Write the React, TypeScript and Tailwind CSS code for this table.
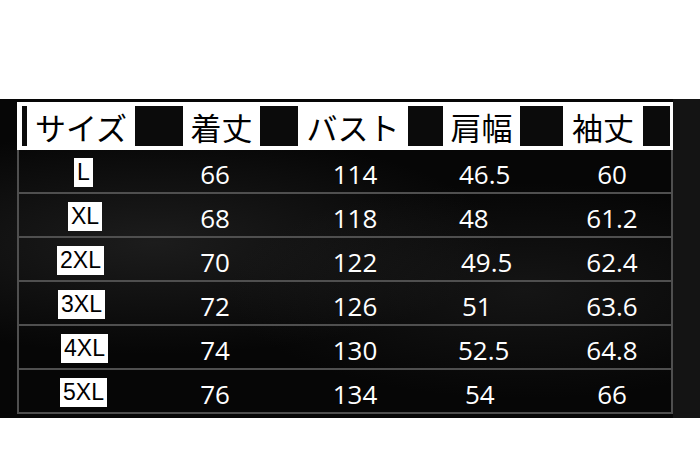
import React from "react";

type Row = {
  size: string;
  labelOffset: string;
  values: [string, string, string, string];
  shoulderPad: string;
};

const rows: Row[] = [
  { size: "L", labelOffset: "ml-[55px]", values: ["66", "114", "46.5", "60"], shoulderPad: "pl-[30px]" },
  { size: "XL", labelOffset: "ml-[49px]", values: ["68", "118", "48", "61.2"], shoulderPad: "pl-[30px]" },
  { size: "2XL", labelOffset: "ml-[38px]", values: ["70", "122", "49.5", "62.4"], shoulderPad: "pl-[32px]" },
  { size: "3XL", labelOffset: "ml-[39px]", values: ["72", "126", "51", "63.6"], shoulderPad: "pl-[33px]" },
  { size: "4XL", labelOffset: "ml-[42px]", values: ["74", "130", "52.5", "64.8"], shoulderPad: "pl-[29px]" },
  { size: "5XL", labelOffset: "ml-[41px]", values: ["76", "134", "54", "66"], shoulderPad: "pl-[36px]" },
];

const jp = "font-['Noto_Sans_CJK_JP',sans-serif]";
const num = "font-['Open_Sans','Noto_Sans',sans-serif]";

function HeaderCell({ label, width }: { label: string; width: string }) {
  return (
    <div className={`${width} h-full flex items-center justify-center text-[31px] leading-none text-black ${jp}`}>
      {label}
    </div>
  );
}

function Gap({ width }: { width: string }) {
  return <div className={`${width} h-[40px] bg-[#0b0b0b]`} />;
}

export default function App() {
  return (
    <div className="w-[700px] h-[454px] bg-white flex flex-col overflow-hidden">
      <div className="h-[99px] shrink-0" />

      <div className="relative h-[319px] shrink-0 bg-[#060606] pt-[3px] pl-[17px] overflow-hidden">
        {/* fabric texture */}
        <div className="absolute inset-0 bg-[radial-gradient(ellipse_at_22%_45%,rgba(70,70,70,0.35),transparent_45%)]" />
        <div className="absolute inset-0 bg-[radial-gradient(ellipse_at_75%_60%,rgba(55,55,55,0.3),transparent_40%)]" />
        <div className="absolute right-0 top-0 h-full w-[27px] bg-[#141414]" />

        <div className="relative w-[656px]">
          {/* header */}
          <div className="h-[48px] bg-white flex items-center pl-[5px] pr-[3px]">
            <Gap width="w-[5px]" />
            <HeaderCell label="サイズ" width="w-[108px]" />
            <Gap width="w-[48px]" />
            <HeaderCell label="着丈" width="w-[77px]" />
            <Gap width="w-[38px]" />
            <HeaderCell label="バスト" width="w-[110px]" />
            <Gap width="w-[35px]" />
            <HeaderCell label="肩幅" width="w-[77px]" />
            <Gap width="w-[43px]" />
            <HeaderCell label="袖丈" width="w-[80px]" />
            <Gap width="w-[27px]" />
          </div>

          {/* rows */}
          {rows.map((r) => (
            <div
              key={r.size}
              className="h-[44px] grid grid-cols-[130px_132px_148px_120px_126px] border-x-2 border-b-2 border-[#4f4f4f]"
            >
              <div className="flex items-center pt-[3px]">
                <span
                  className={`${r.labelOffset} bg-white text-black px-[3px] h-[29px] flex items-center text-[23px] leading-none font-['Liberation_Sans',Arial,sans-serif]`}
                >
                  {r.size}
                </span>
              </div>
              <div className={`flex items-center justify-center pt-[6px] text-white text-[26px] leading-none ${num}`}>
                {r.values[0]}
              </div>
              <div className={`flex items-center justify-center pt-[6px] text-white text-[26px] leading-none ${num}`}>
                {r.values[1]}
              </div>
              <div className={`flex items-center ${r.shoulderPad} pt-[6px] text-white text-[26px] leading-none ${num}`}>
                {r.values[2]}
              </div>
              <div className={`flex items-center justify-center pt-[6px] text-white text-[26px] leading-none ${num}`}>
                {r.values[3]}
              </div>
            </div>
          ))}
        </div>
      </div>

      <div className="flex-1" />
    </div>
  );
}
